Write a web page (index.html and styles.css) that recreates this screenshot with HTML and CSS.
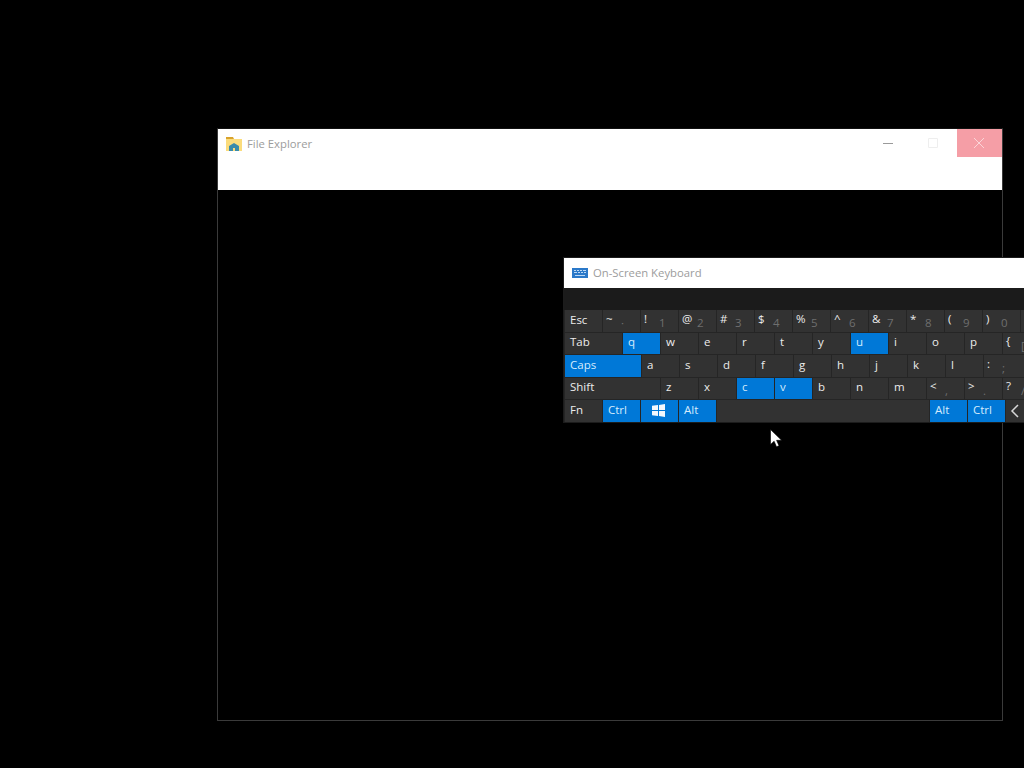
FILE: index.html
```html
<!DOCTYPE html>
<html lang="en">
<head>
<meta charset="utf-8">
<title>On-Screen Keyboard</title>
<link rel="stylesheet" href="styles.css">
</head>
<body>
<section class="window explorer">
  <header class="explorer-bar">
    <div class="titlebar">
      <svg class="app-icon" width="16" height="16" viewBox="0 0 16 16"><path fill="#d9a32c" d="M0 1h7l1 2H0z"/><path fill="#fbdc7c" d="M0 3h16v12H0z"/><path fill="#3a8bab" d="M3 15v-5l5-3 5 3v5H9v-3H7v3z"/></svg>
      <span class="title">File Explorer</span>
      <div class="caption">
        <span class="cap-btn"><svg width="10" height="10" viewBox="0 0 10 10"><path stroke="#9a9a9a" d="M0 5.5h10"/></svg></span>
        <span class="cap-btn"><svg width="10" height="10" viewBox="0 0 10 10"><path fill="none" stroke="#eeeeee" d="M.5.5h9v9h-9z"/></svg></span>
        <span class="cap-btn close"><svg width="10" height="10" viewBox="0 0 10 10"><path stroke="#fbd5d8" d="M0 0l10 10M10 0L0 10"/></svg></span>
      </div>
    </div>
  </header>
</section>

<section class="window osk">
  <header class="osk-title">
    <svg class="app-icon" width="16" height="16" viewBox="0 0 16 16"><path fill="#2b79c9" d="M0 3h16v10H0z"/><path fill="#bcd9f5" d="M2 5h2v1H2zM5 5h2v1H5zM8 5h2v1H8zM11 5h3v1h-3zM2 7h3v1H2zM6 7h2v1H6zM9 7h2v1H9zM12 7h2v1h-2zM3 10h10v1H3z"/></svg>
    <span class="title">On-Screen Keyboard</span>
  </header>
  <div class="osk-toolbar"></div>
  <div class="keys">
    <div class="row">
      <span class="key w1 text">Esc</span>
      <span class="key w1 dual"><b>~</b><i>·</i></span>
      <span class="key w1 dual"><b>!</b><i>1</i></span>
      <span class="key w1 dual"><b>@</b><i>2</i></span>
      <span class="key w1 dual"><b>#</b><i>3</i></span>
      <span class="key w1 dual"><b>$</b><i>4</i></span>
      <span class="key w1 dual"><b>%</b><i>5</i></span>
      <span class="key w1 dual"><b>^</b><i>6</i></span>
      <span class="key w1 dual"><b>&amp;</b><i>7</i></span>
      <span class="key w1 dual"><b>*</b><i>8</i></span>
      <span class="key w1 dual"><b>(</b><i>9</i></span>
      <span class="key w1 dual"><b>)</b><i>0</i></span>
      <span class="key cut"></span>
    </div>
    <div class="row">
      <span class="key w15 text">Tab</span>
      <span class="key w1 on">q</span><span class="key w1">w</span><span class="key w1">e</span><span class="key w1">r</span><span class="key w1">t</span><span class="key w1">y</span>
      <span class="key w1 on">u</span><span class="key w1">i</span><span class="key w1">o</span><span class="key w1">p</span>
      <span class="key cut dual"><b>{</b><i>[</i></span>
    </div>
    <div class="row">
      <span class="key w2 on text">Caps</span>
      <span class="key w1">a</span><span class="key w1">s</span><span class="key w1">d</span><span class="key w1">f</span><span class="key w1">g</span><span class="key w1">h</span><span class="key w1">j</span><span class="key w1">k</span><span class="key w1">l</span>
      <span class="key cut dual"><b>:</b><i>;</i></span>
    </div>
    <div class="row">
      <span class="key w25 text">Shift</span>
      <span class="key w1">z</span><span class="key w1">x</span><span class="key w1 on">c</span><span class="key w1 on">v</span><span class="key w1">b</span><span class="key w1">n</span><span class="key w1">m</span>
      <span class="key w1 dual"><b>&lt;</b><i>,</i></span>
      <span class="key w1 dual"><b>&gt;</b><i>.</i></span>
      <span class="key cut dual"><b>?</b><i>/</i></span>
    </div>
    <div class="row">
      <span class="key w1 text">Fn</span>
      <span class="key w1 on text">Ctrl</span>
      <span class="key w1 on win"><svg width="13" height="13" viewBox="0 0 13 13"><path fill="#f2f8fd" d="M0 1.8L6 1v5H0zM7 .9L13 0v6H7zM0 7h6v5L0 11.2zM7 7h6v6l-6-.9z"/></svg></span>
      <span class="key w1 on text">Alt</span>
      <span class="key space"></span>
      <span class="key w1 on text">Alt</span>
      <span class="key w1 on text">Ctrl</span>
      <span class="key cut arrow"><svg width="10" height="14" viewBox="0 0 10 14"><path fill="none" stroke="#d8d8d8" stroke-width="1.5" d="M8 1L2 7l6 6"/></svg></span>
    </div>
  </div>
</section>

<svg class="cursor" width="12" height="19" viewBox="0 0 12 19"><path fill="#fff" stroke="#000" stroke-width=".6" d="M.5.5v15l3.6-3.3 2.4 5.6 2.5-1.1-2.4-5.4h5z"/></svg>
</body>
</html>
```

FILE: styles.css
```css
* { box-sizing: border-box; }

html, body {
  margin: 0;
  height: 100%;
  overflow: hidden;
  background: #000;
  font-family: "Open Sans", "Noto Sans", sans-serif;
}

.window { position: absolute; }

.explorer {
  left: 217px;
  top: 128px;
  width: 786px;
  height: 593px;
  border: 1px solid #3a3a3a;
  border-top-color: #111;
  background: #000;
}

.explorer-bar {
  height: 61px;
  background: #fff;
}

.titlebar {
  display: flex;
  align-items: flex-start;
  height: 28px;
}

.app-icon {
  flex: none;
  margin: 7px 5px 0 8px;
}

.title {
  font-size: 11.3px;
  line-height: 30px;
  color: #9c9c9c;
}

.caption {
  display: flex;
  margin-left: auto;
}

.cap-btn {
  display: flex;
  align-items: center;
  justify-content: center;
  width: 45px;
  height: 28px;
  padding-right: 4px;
}

.close {
  padding-right: 2px;
  background: #f59ea6;
}

.osk {
  left: 563px;
  top: 257px;
  width: 461px;
  height: 166px;
  border: 1px solid #1c1c1c;
  border-right: 0;
  background: #1b1b1b;
}

.osk-title {
  display: flex;
  height: 30px;
  background: #fff;
}

.osk-toolbar { height: 22px; }

.keys {
  display: flex;
  flex-direction: column;
  gap: 1px;
  height: 112px;
  padding-left: 1px;
  background: #252525;
}

.row {
  display: flex;
  flex: 1;
  gap: 1px;
  min-height: 0;
}

.key {
  display: flex;
  flex: none;
  align-items: center;
  height: 100%;
  padding: 0 0 3px 5px;
  overflow: hidden;
  font-size: 11.5px;
  line-height: 1;
  color: #ececec;
  background: #323232;
}

.w1 { width: 37px; }
.w15 { width: 57px; }
.w2 { width: 76px; }
.w25 { width: 95px; }
.space { width: 212px; }
.cut { flex: 1; }

.on {
  color: #d5ebfc;
  background: #0078d7;
}

.dual { padding-left: 3px; }

.dual b {
  flex: none;
  width: 15px;
  margin-top: -2px;
  font-weight: 400;
}

.dual i {
  margin-top: 7px;
  font-style: normal;
  color: #6f6f6f;
}

.win { padding: 0 0 1px 11px; }
.arrow { padding: 0 0 0 4px; }

.cursor {
  position: absolute;
  left: 770px;
  top: 429px;
}
```
